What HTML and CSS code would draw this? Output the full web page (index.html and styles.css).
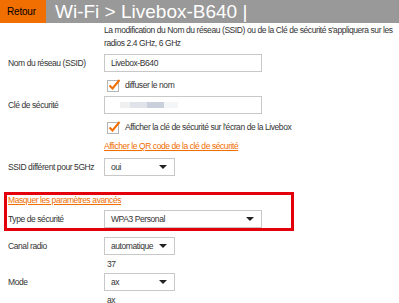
FILE: index.html
```html
<!DOCTYPE html>
<html lang="fr">
<head>
    <meta charset="UTF-8">
    <title>Wi-Fi</title>
    <link rel="stylesheet" href="styles.css">
</head>
<body>
    <header class="topbar">
        <a class="back" href="#">Retour</a>
        <h1>Wi-Fi &gt; Livebox-B640 |</h1>
    </header>

    <div class="page">
        <div class="row">
            <div></div>
            <p class="note">La modification du Nom du réseau (SSID) ou de la Clé de sécurité s'appliquera sur les<br>radios 2.4 GHz, 6 GHz</p>
        </div>

        <div class="row field first">
            <label>Nom du réseau (SSID)</label>
            <div class="input wide">Livebox-B640</div>
        </div>
        <div class="row check">
            <div></div>
            <div class="checkline">
                <svg class="box" width="14" height="14" viewBox="0 0 14 14"><rect x="0.5" y="2.5" width="11" height="11" fill="#fff" stroke="#b5b5b5"/><path d="M2.5 7.5 L5.5 10.5 L12.5 2" fill="none" stroke="#f16e00" stroke-width="2"/></svg>
                <span>diffuser le nom</span>
            </div>
        </div>

        <div class="row field tight">
            <label>Clé de sécurité</label>
            <div class="input wide key"><span class="k1"></span><span class="k2"></span><span class="k3"></span><span class="k4"></span></div>
        </div>
        <div class="row check">
            <div></div>
            <div class="checkline">
                <svg class="box" width="14" height="14" viewBox="0 0 14 14"><rect x="0.5" y="2.5" width="11" height="11" fill="#fff" stroke="#b5b5b5"/><path d="M2.5 7.5 L5.5 10.5 L12.5 2" fill="none" stroke="#f16e00" stroke-width="2"/></svg>
                <span>Afficher la clé de sécurité sur l'écran de la Livebox</span>
            </div>
        </div>
        <div class="row linkrow">
            <div></div>
            <a class="orange" href="#">Afficher le QR code de la clé de sécurité</a>
        </div>

        <div class="row field">
            <label>SSID différent pour 5GHz</label>
            <div class="select short">oui<span class="arrow"></span></div>
        </div>

        <div class="advanced">
            <a class="orange" href="#">Masquer les paramètres avancés</a>
            <div class="row field">
                <label>Type de sécurité</label>
                <div class="select wide">WPA3 Personal<span class="arrow"></span></div>
            </div>
        </div>

        <div class="row field">
            <label>Canal radio</label>
            <div class="select short">automatique<span class="arrow"></span></div>
        </div>
        <div class="row info">
            <div></div>
            <span>37</span>
        </div>

        <div class="row field tight">
            <label>Mode</label>
            <div class="select short">ax<span class="arrow"></span></div>
        </div>
        <div class="row info">
            <div></div>
            <span>ax</span>
        </div>
    </div>
</body>
</html>
```

FILE: styles.css
```css
body {
    margin: 0;
    font-family: "Liberation Sans", Arial, sans-serif;
    font-size: 8.5px;
    letter-spacing: -0.42px;
    color: #333;
    background: #fff;
}

.topbar {
    display: flex;
    height: 23px;
    background-color: #999;
    letter-spacing: 0;
}
.back {
    display: flex;
    align-items: center;
    width: 46px;
    padding-left: 7px;
    box-sizing: border-box;
    background-color: #f16e00;
    color: #000;
    font-size: 10px;
    letter-spacing: -0.2px;
    text-decoration: none;
}
.topbar h1 {
    margin: 0 0 0 9px;
    color: #fff;
    font-weight: normal;
    font-size: 19px;
    line-height: 23px;
}

.page {
    padding: 1px 0 0 8px;
}
.row {
    display: grid;
    grid-template-columns: 96px 1fr;
    align-items: center;
}
.note {
    margin: 0;
    line-height: 13px;
    white-space: nowrap;
}
.field {
    margin-top: 6px;
}
.field.first {
    margin-top: 4px;
}
.field.tight {
    margin-top: 2px;
}
.input, .select {
    position: relative;
    box-sizing: border-box;
    height: 18px;
    border: 1px solid #c8c8c8;
    padding-left: 6px;
    line-height: 16px;
    background: #fff;
}
.wide {
    width: 158px;
}
.short {
    width: 71px;
}
.key {
    display: flex;
    align-items: center;
    padding-left: 15px;
}
.key span {
    display: block;
    height: 6px;
}
.k1 { width: 10px; background: #f0f0f0; }
.k2 { width: 17px; background: #e0e4ea; }
.k3 { width: 17px; background: #c9d0db; }
.k4 { width: 14px; background: #f4f5f7; }

.arrow {
    position: absolute;
    right: 7px;
    top: 6px;
    border-left: 4px solid transparent;
    border-right: 4px solid transparent;
    border-top: 4px solid #222;
}

.check {
    margin-top: 4px;
    height: 18px;
}
.checkline {
    display: flex;
    align-items: center;
    gap: 4px;
    padding-left: 3px;
}
.linkrow {
    margin-top: 4px;
    line-height: 12px;
}
a.orange {
    color: #f16e00;
    text-decoration: underline;
}

.advanced {
    margin: 16px 0 0 -4px;
    width: 290px;
    box-sizing: border-box;
    border: 3px solid #e3000b;
    padding: 0 0 0 1px;
    line-height: 10px;
}
.advanced .field {
    margin-top: 5px;
}
.advanced .select {
    line-height: 16px;
}

.info {
    margin-top: 2px;
    line-height: 14px;
}
.info span {
    padding-left: 3px;
}
```
